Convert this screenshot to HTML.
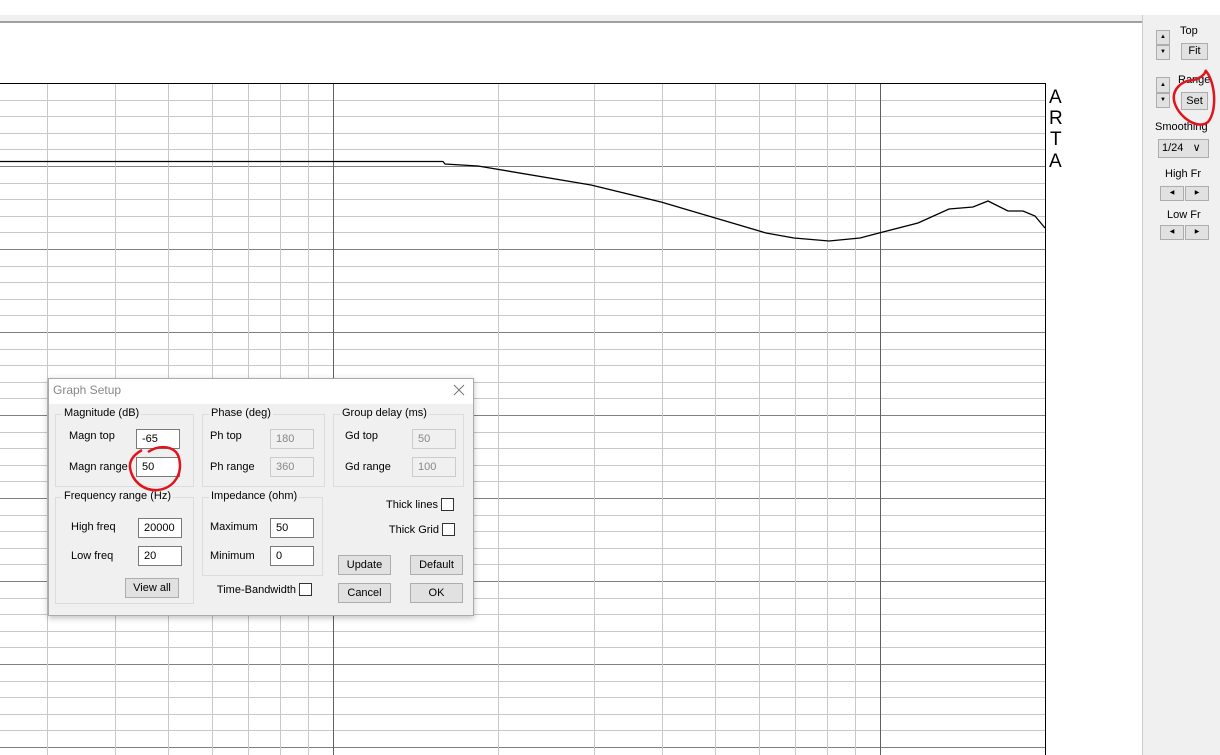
<!DOCTYPE html>
<html><head><meta charset="utf-8"><style>
body{margin:0;width:1220px;height:755px;overflow:hidden;background:#fff;font-family:"Liberation Sans",sans-serif;position:relative}
.a{position:absolute}
.t{position:absolute;font-size:11px;color:#000;white-space:nowrap;line-height:13px}
.r{text-align:right}
.in{position:absolute;background:#fff;border:1px solid #7a7a7a;font-size:11px;line-height:18px;padding-left:5px;box-sizing:border-box}
.dis{background:#f0f0f0;border-color:#ccc;color:#888}
.btn{position:absolute;background:#e1e1e1;border:1px solid #adadad;font-size:11px;text-align:center;box-sizing:border-box}
.grp{position:absolute;border:1px solid #dcdcdc;box-sizing:border-box}
.gl{position:absolute;top:-8px;left:6px;background:#f0f0f0;padding:0 2px;font-size:11px;white-space:nowrap}
.cb{position:absolute;width:13px;height:13px;border:1px solid #333;background:#fff;box-sizing:border-box}
</style></head><body>
<div class="a" style="left:0;top:15px;width:1220px;height:7px;background:#f0f0f0"></div>
<div class="a" style="left:0;top:21px;width:1142px;height:2px;background:#a0a0a0"></div>
<div class="a" style="left:1142px;top:15px;width:78px;height:740px;background:#f0f0f0;border-left:1px solid #ccc"></div>
<svg class="a" style="left:0;top:0" width="1142" height="755">
<g id="grid"></g>
<polyline fill="none" stroke="#000" stroke-width="1.3" points="0,161.5 443,161.5 445,164 478,166 591,185 661,202 766,233 794,238 829,241 860,238 879,233 918,223 949,209 973,207 988,201 1008,211 1023,211 1035,216 1045,228"/>
<text x="1049" y="103" font-size="19" font-family="Liberation Sans">A</text>
<text x="1049" y="124" font-size="19" font-family="Liberation Sans">R</text>
<text x="1050" y="145" font-size="19" font-family="Liberation Sans">T</text>
<text x="1049" y="167" font-size="19" font-family="Liberation Sans">A</text>
</svg>
<script>
(function(){var g=document.getElementById('grid'),s='';
for(var i=0;i<=40;i++){var y=83+i*16.6;if(y>755)break;var maj=i%5==0;s+='<line x1="0" x2="1045" y1="'+(Math.round(y)+.5)+'" y2="'+(Math.round(y)+.5)+'" stroke="'+(maj?'#808080':'#c8c8c8')+'"/>';}
var d=547;
for(var b=0;b<3;b++){var x0=-214+b*d;for(var k=1;k<10;k++){var x=x0+Math.log10(k)*d;if(x<0||x>1045)continue;s+='<line y1="83" y2="755" x1="'+(Math.round(x)+.5)+'" x2="'+(Math.round(x)+.5)+'" stroke="'+(k==1?'#606060':'#c8c8c8')+'"/>';}}
s+='<line x1="0" x2="1045" y1="83.5" y2="83.5" stroke="#000"/><line x1="1045.5" x2="1045.5" y1="83" y2="755" stroke="#000"/>';
g.innerHTML=s;})();
</script>
<!-- right panel -->
<div class="btn" style="left:1156px;top:30px;width:14px;height:15px;font-size:6px;line-height:13px">▲</div>
<div class="btn" style="left:1156px;top:45px;width:14px;height:15px;font-size:6px;line-height:13px">▼</div>
<div class="t" style="left:1180px;top:25px">Top</div>
<div class="btn" style="left:1181px;top:43px;width:27px;height:17px;line-height:15px">Fit</div>
<div class="btn" style="left:1156px;top:77px;width:14px;height:16px;font-size:6px;line-height:14px">▲</div>
<div class="btn" style="left:1156px;top:93px;width:14px;height:15px;font-size:6px;line-height:13px">▼</div>
<div class="t" style="left:1178px;top:74px">Range</div>
<div class="btn" style="left:1181px;top:92px;width:27px;height:18px;line-height:16px">Set</div>
<div class="t" style="left:1155px;top:121px">Smoothing</div>
<div class="btn" style="left:1158px;top:139px;width:51px;height:19px;line-height:17px;text-align:left;padding-left:3px">1/24 &nbsp;&nbsp;∨</div>
<div class="t" style="left:1165px;top:168px">High Fr</div>
<div class="btn" style="left:1160px;top:186px;width:24px;height:15px;font-size:6px;line-height:13px">◀</div>
<div class="btn" style="left:1185px;top:186px;width:24px;height:15px;font-size:6px;line-height:13px">▶</div>
<div class="t" style="left:1167px;top:209px">Low Fr</div>
<div class="btn" style="left:1160px;top:225px;width:24px;height:15px;font-size:6px;line-height:13px">◀</div>
<div class="btn" style="left:1185px;top:225px;width:24px;height:15px;font-size:6px;line-height:13px">▶</div>
<!-- dialog -->
<div class="a" style="left:48px;top:378px;width:426px;height:238px;background:#f0f0f0;border:1px solid #aaa;box-sizing:border-box;box-shadow:0 2px 6px rgba(0,0,0,.25)">
<div class="a" style="left:0;top:0;width:424px;height:25px;background:#fff"></div>
</div>
<div class="t" style="left:53px;top:384px;color:#888;font-size:12px">Graph Setup</div>
<svg class="a" style="left:453px;top:384px" width="12" height="12"><path d="M1,1L11,11M11,1L1,11" stroke="#777" stroke-width="1"/></svg>
<div class="grp" style="left:55px;top:414px;width:139px;height:73px"><span class="gl">Magnitude (dB)</span></div>
<div class="grp" style="left:202px;top:414px;width:123px;height:73px"><span class="gl">Phase (deg)</span></div>
<div class="grp" style="left:333px;top:414px;width:131px;height:73px"><span class="gl">Group delay (ms)</span></div>
<div class="grp" style="left:55px;top:497px;width:139px;height:107px"><span class="gl">Frequency range (Hz)</span></div>
<div class="grp" style="left:202px;top:497px;width:121px;height:79px"><span class="gl">Impedance (ohm)</span></div>
<div class="t" style="left:69px;top:430px">Magn top</div>
<div class="in" style="left:136px;top:429px;width:44px;height:20px">-65</div>
<div class="t" style="left:69px;top:461px">Magn range</div>
<div class="in" style="left:136px;top:457px;width:44px;height:20px">50</div>
<div class="t" style="left:210px;top:430px">Ph top</div>
<div class="in dis" style="left:270px;top:429px;width:44px;height:20px">180</div>
<div class="t" style="left:210px;top:461px">Ph range</div>
<div class="in dis" style="left:270px;top:457px;width:44px;height:20px">360</div>
<div class="t" style="left:345px;top:430px">Gd top</div>
<div class="in dis" style="left:412px;top:429px;width:44px;height:20px">50</div>
<div class="t" style="left:345px;top:461px">Gd range</div>
<div class="in dis" style="left:412px;top:457px;width:44px;height:20px">100</div>
<div class="t" style="left:71px;top:521px">High freq</div>
<div class="in" style="left:138px;top:518px;width:44px;height:20px">20000</div>
<div class="t" style="left:71px;top:550px">Low freq</div>
<div class="in" style="left:138px;top:546px;width:44px;height:20px">20</div>
<div class="btn" style="left:125px;top:578px;width:54px;height:20px;line-height:18px">View all</div>
<div class="t" style="left:210px;top:521px">Maximum</div>
<div class="in" style="left:270px;top:518px;width:44px;height:20px">50</div>
<div class="t" style="left:210px;top:550px">Minimum</div>
<div class="in" style="left:270px;top:546px;width:44px;height:20px">0</div>
<div class="t r" style="left:200px;width:96px;top:584px">Time-Bandwidth</div>
<div class="cb" style="left:299px;top:583px"></div>
<div class="t r" style="left:360px;width:78px;top:499px">Thick lines</div>
<div class="cb" style="left:441px;top:498px"></div>
<div class="t r" style="left:360px;width:79px;top:524px">Thick Grid</div>
<div class="cb" style="left:442px;top:523px"></div>
<div class="btn" style="left:338px;top:555px;width:53px;height:20px;line-height:18px">Update</div>
<div class="btn" style="left:410px;top:555px;width:53px;height:20px;line-height:18px">Default</div>
<div class="btn" style="left:338px;top:583px;width:53px;height:20px;line-height:18px">Cancel</div>
<div class="btn" style="left:410px;top:583px;width:53px;height:20px;line-height:18px">OK</div>
<svg class="a" style="left:0;top:0" width="1220" height="755">
<path d="M148,452 C160,444 176,446 179,458 C183,474 174,488 158,490 C142,491 132,480 130,468 C129,460 135,454 142,450" fill="none" stroke="#e0141c" stroke-width="2.5"/>
<path d="M1205,70 C1215,80 1218,110 1208,122 C1198,130 1180,118 1175,104 C1170,90 1182,80 1194,80 C1200,78 1205,75 1206,70" fill="none" stroke="#e0141c" stroke-width="2.5"/>
</svg>
</body></html>
